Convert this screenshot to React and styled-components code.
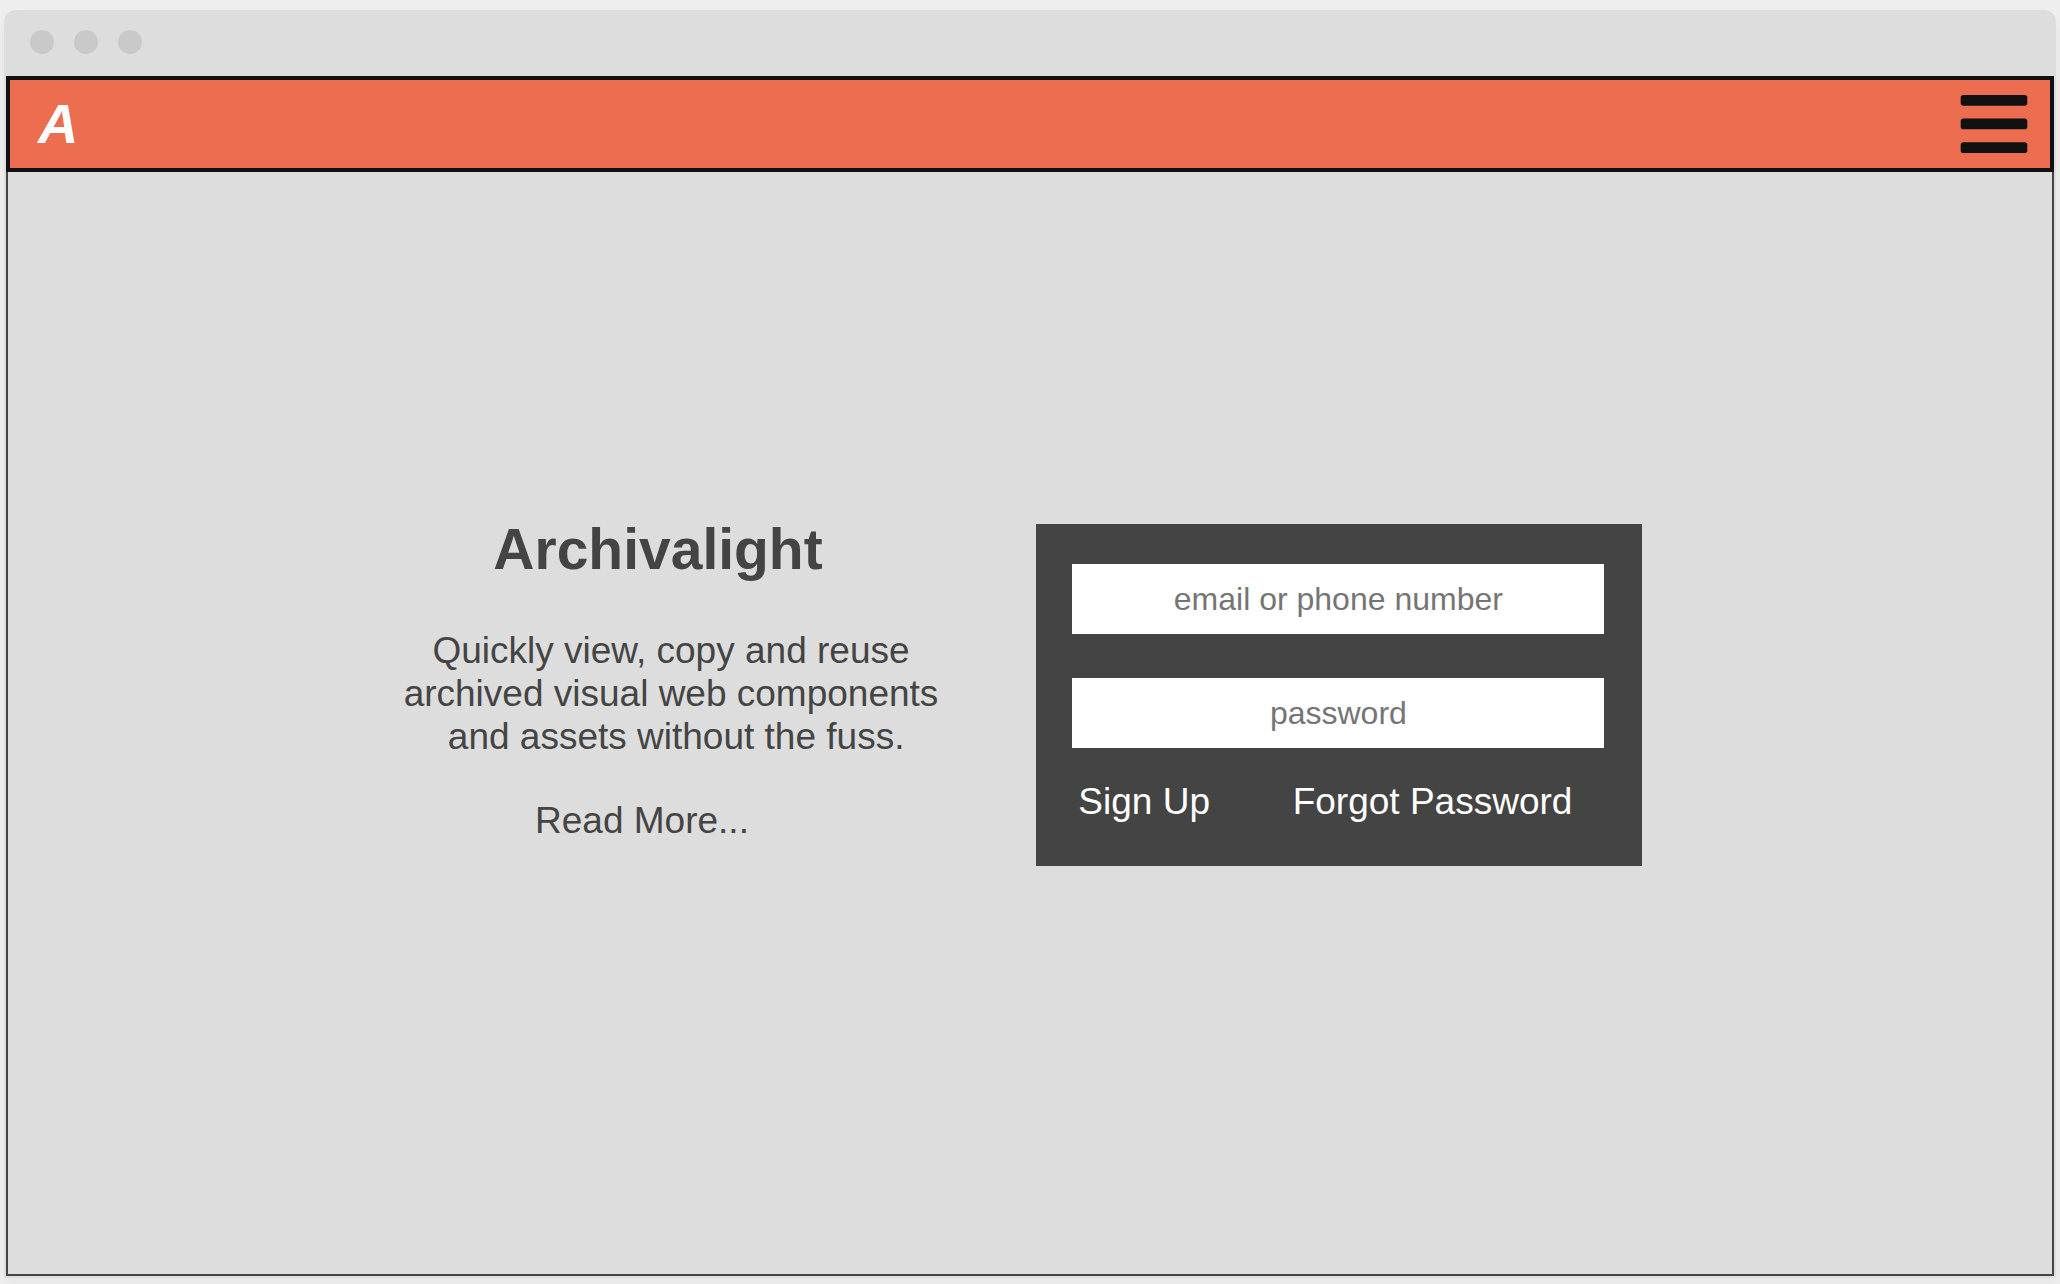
import React from "react";
import styled, { createGlobalStyle } from "styled-components";

const GlobalStyle = createGlobalStyle`
  *, *::before, *::after { box-sizing: border-box; }
  body {
    margin: 0;
    background: #eeeeee;
    font-family: "Liberation Sans", Arial, sans-serif;
    color: #444444;
  }
`;

const Page = styled.div`
  display: flex;
  min-height: 100vh;
  padding: 10px 4px 6px;
`;

const Window = styled.div`
  display: flex;
  flex: 1;
  flex-direction: column;
  padding: 0 2px 2px;
  border-radius: 12px 12px 0 0;
  background: #dddddd;
  box-shadow: 0 6px 12px rgba(0, 0, 0, 0.03);
`;

const TitleBar = styled.div`
  display: flex;
  gap: 20px;
  padding: 20px 24px 22px;
`;

const Dot = styled.span`
  width: 24px;
  height: 24px;
  border-radius: 50%;
  background: #c9c9c9;
`;

const Header = styled.header`
  display: flex;
  align-items: center;
  justify-content: space-between;
  height: 96px;
  padding: 0 22px 0 28px;
  border: 4px solid #111111;
  background: #ed6d51;
`;

const Logo = styled.a`
  color: #ffffff;
  font-size: 56px;
  font-style: italic;
  font-weight: 700;
  line-height: 64px;
  text-decoration: none;
`;

const MenuButton = styled.button`
  display: flex;
  padding: 0;
  border: 0;
  background: none;
  color: #111111;
  cursor: pointer;
`;

const Main = styled.main`
  display: flex;
  flex: 1;
  align-items: center;
  justify-content: center;
  padding: 0 14px 64px 0;
  border: 2px solid #444444;
  border-top: 0;
`;

const Columns = styled.div`
  display: flex;
  flex-wrap: wrap;
  align-items: flex-start;
  gap: 98px;
`;

const Intro = styled.section`
  display: flex;
  flex-direction: column;
  align-items: center;
  text-align: center;
`;

const Title = styled.h1`
  margin: 0 0 48px;
  padding-right: 26px;
  font-size: 57px;
  line-height: 64px;
`;

const Lead = styled.p`
  margin: 0 0 41px;
  font-size: 37px;
  line-height: 43px;
`;

const TextLink = styled.a`
  color: ${({ $light }) => ($light ? "#ffffff" : "#444444")};
  font-size: 37px;
  line-height: 43px;
  text-decoration: none;
`;

const ReadMore = styled.div`
  padding-right: 58px;
`;

const LoginForm = styled.form`
  display: flex;
  flex-direction: column;
  gap: 44px;
  width: 606px;
  max-width: 100%;
  margin-top: 7px;
  padding: 40px 38px 43px 36px;
  background: #444444;
`;

const Field = styled.input`
  width: 100%;
  height: 70px;
  padding: 2px 0 0;
  border: 0;
  border-radius: 0;
  background: #ffffff;
  color: #444444;
  font-family: inherit;
  font-size: 32px;
  text-align: center;

  &::placeholder { color: #757575; }
`;

const FormLinks = styled.nav`
  display: flex;
  justify-content: space-between;
  margin-top: -12px;
  padding: 0 32px 0 6px;
`;

function MenuIcon() {
  return (
    <svg width="68" height="60" viewBox="0 0 68 60" fill="currentColor" aria-hidden="true">
      <rect x="0.7" y="1" width="66.6" height="10.7" rx="2.6" />
      <rect x="0.7" y="24.6" width="66.6" height="10.7" rx="2.6" />
      <rect x="0.7" y="48.3" width="66.6" height="10.7" rx="2.6" />
    </svg>
  );
}

export default function App() {
  return (
    <>
      <GlobalStyle />
      <Page>
        <Window>
          <TitleBar>
            <Dot />
            <Dot />
            <Dot />
          </TitleBar>
          <Header>
            <Logo href="#home">A</Logo>
            <MenuButton type="button" aria-label="Menu">
              <MenuIcon />
            </MenuButton>
          </Header>
          <Main>
            <Columns>
              <Intro>
                <Title>Archivalight</Title>
                <Lead>
                  Quickly view, copy and reuse
                  <br />
                  archived visual web components
                  <br />
                  &nbsp;and assets without the fuss.
                </Lead>
                <ReadMore>
                  <TextLink href="#more">Read More...</TextLink>
                </ReadMore>
              </Intro>
              <LoginForm>
                <Field type="text" placeholder="email or phone number" aria-label="email or phone number" />
                <Field type="password" placeholder="password" aria-label="password" />
                <FormLinks>
                  <TextLink $light href="#signup">Sign Up</TextLink>
                  <TextLink $light href="#forgot">Forgot Password</TextLink>
                </FormLinks>
              </LoginForm>
            </Columns>
          </Main>
        </Window>
      </Page>
    </>
  );
}
